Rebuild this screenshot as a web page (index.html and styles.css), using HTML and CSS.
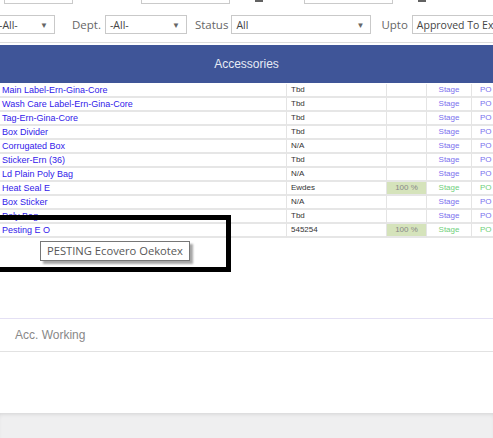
FILE: index.html
```html
<!DOCTYPE html>
<html lang="en">
<head>
    <meta charset="UTF-8">
    <meta name="viewport" content="width=device-width, initial-scale=1.0">
    <title>Accessories</title>
    <link rel="stylesheet" href="styles.css">
</head>
<body>
    <div class="page">
        <!-- fields of the row above, mostly scrolled away -->
        <div class="top-fields">
            <span class="field field-a"></span>
            <span class="field field-b"></span>
            <span class="mark"></span>
            <span class="field field-c"></span>
            <span class="mark"></span>
        </div>

        <!-- filters -->
        <div class="filters">
            <div class="select sel-first"><span>-All-</span><i>&#9660;</i></div>
            <label class="lbl lbl-dept">Dept.</label>
            <div class="select sel-dept"><span>-All-</span><i>&#9660;</i></div>
            <label class="lbl lbl-status">Status</label>
            <div class="select sel-status"><span>All</span><i>&#9660;</i></div>
            <label class="lbl lbl-upto">Upto</label>
            <div class="select sel-upto"><span>Approved To Ex</span></div>
        </div>

        <div class="panel">
            <div class="panel-title">Accessories</div>
            <table class="acc">
                <colgroup>
                    <col class="c-name">
                    <col class="c-sup">
                    <col class="c-pct">
                    <col class="c-stage">
                    <col class="c-po">
                </colgroup>
                <tr><td class="name">Main Label-Ern-Gina-Core</td><td>Tbd</td><td></td><td class="stage">Stage</td><td class="po">PO</td></tr>
                <tr><td class="name">Wash Care Label-Ern-Gina-Core</td><td>Tbd</td><td></td><td class="stage">Stage</td><td class="po">PO</td></tr>
                <tr><td class="name">Tag-Ern-Gina-Core</td><td>Tbd</td><td></td><td class="stage">Stage</td><td class="po">PO</td></tr>
                <tr><td class="name">Box Divider</td><td>Tbd</td><td></td><td class="stage">Stage</td><td class="po">PO</td></tr>
                <tr><td class="name">Corrugated Box</td><td>N/A</td><td></td><td class="stage">Stage</td><td class="po">PO</td></tr>
                <tr><td class="name">Sticker-Ern (36)</td><td>Tbd</td><td></td><td class="stage">Stage</td><td class="po">PO</td></tr>
                <tr><td class="name">Ld Plain Poly Bag</td><td>N/A</td><td></td><td class="stage">Stage</td><td class="po">PO</td></tr>
                <tr class="done"><td class="name">Heat Seal E</td><td>Ewdes</td><td class="pct">100 %</td><td class="stage">Stage</td><td class="po">PO</td></tr>
                <tr><td class="name">Box Sticker</td><td>N/A</td><td></td><td class="stage">Stage</td><td class="po">PO</td></tr>
                <tr><td class="name">Poly Bag</td><td>Tbd</td><td></td><td class="stage">Stage</td><td class="po">PO</td></tr>
                <tr class="done"><td class="name">Pesting E O</td><td>545254</td><td class="pct">100 %</td><td class="stage">Stage</td><td class="po">PO</td></tr>
            </table>
        </div>

        <div class="working">Acc. Working</div>

        <div class="footer"></div>

        <!-- highlight frame and hover tip -->
        <div class="focus-box"></div>
        <div class="tip">PESTING Ecovero Oekotex</div>
    </div>
</body>
</html>
```

FILE: styles.css
```css
html,body{
    margin: 0;
    padding: 0;
    background: #ffffff;
}
.page{
    position: relative;
    width: 493px;
    height: 438px;
    overflow: hidden;
}

/* top fields */
.top-fields{
    display: flex;
    height: 22px;
    margin-top: -18px;
}
.top-fields > span{
    flex: none;
}
.top-fields .field{
    box-sizing: border-box;
    height: 22px;
    border: 1px solid #cacaca;
}
.field-a{ width: 69px; margin-left: 4px; }
.field-b{ width: 89px; margin-left: 68px; }
.field-c{ width: 89px; margin-left: 41px; }
.top-fields .mark{
    width: 8px;
    height: 20px;
    margin-left: 25px;
    background: #626262;
}

/* filters */
.filters{
    display: flex;
    align-items: center;
    height: 19px;
    margin-top: 11px;
    font-family: "Open Sans", "Liberation Sans", sans-serif;
    font-size: 10.5px;
}
.filters > *{
    flex: none;
}
.select{
    box-sizing: border-box;
    display: flex;
    align-items: center;
    justify-content: space-between;
    height: 19px;
    padding: 0 6px 0 4px;
    border: 1px solid #c9c9c9;
    color: #444;
    white-space: nowrap;
    overflow: hidden;
}
.select i{
    font-style: normal;
    font-size: 8px;
    color: #666;
}
.sel-first{ width: 61px; margin-left: -6px; }
.sel-dept{ width: 82px; }
.sel-status{ width: 140px; }
.sel-upto{ width: 90px; }
.lbl{
    color: #666;
    font-size: 11.5px;
}
.lbl-dept{ margin: 0 4px 0 17px; }
.lbl-status{ margin: 0 3px 0 8px; }
.lbl-upto{ margin: 0 4px 0 10px; }

/* accessories panel */
.panel{
    margin-top: 8px;
    padding-top: 2px;
    border-top: 1px solid #dcdcdc;
}
.panel-title{
    height: 38px;
    line-height: 38px;
    background: #3f5598;
    color: #e6ebf5;
    text-align: center;
    font-family: "Liberation Sans", Arial, sans-serif;
    font-size: 12px;
}
.acc{
    width: 520px;
    margin-top: 1px;
    table-layout: fixed;
    border-collapse: separate;
    border-spacing: 0;
    font-family: "Liberation Sans", Arial, sans-serif;
    font-size: 8px;
    color: #333;
}
.acc .c-name{ width: 287px; }
.acc .c-sup{ width: 100px; }
.acc .c-pct{ width: 40px; }
.acc .c-stage{ width: 45px; }
.acc .c-po{ width: 48px; }
.acc td{
    height: 12px;
    line-height: 12px;
    padding: 0 0 0 4px;
    border-bottom: 2px solid #e6e6e6;
    border-right: 1px solid #e4e4e4;
    white-space: nowrap;
    overflow: hidden;
}
.acc td.name{
    padding-left: 2px;
    font-size: 9px;
    color: #3220ea;
}
.acc td.pct{
    padding: 0;
    text-align: center;
    background: #d5e3bb;
    color: #888;
}
.acc td.stage{
    padding: 0;
    text-align: center;
    color: #7a70ee;
}
.acc td.po{
    padding-left: 8px;
    color: #7a70ee;
}
.acc tr.done td.stage,
.acc tr.done td.po{
    color: #6fcf7a;
}

/* working section */
.working{
    height: 32px;
    line-height: 32px;
    margin-top: 80px;
    padding-left: 15px;
    border-top: 1px solid #e4e0f4;
    border-bottom: 1px solid #e2e2e2;
    font-family: "Liberation Sans", Arial, sans-serif;
    font-size: 12px;
    color: #888;
}
.footer{
    height: 30px;
    margin-top: 61px;
    background: #efeff0;
    box-shadow: inset 0 3px 4px -2px rgba(0,0,0,0.12);
}

/* frame drawn over the last rows */
.focus-box{
    position: absolute;
    left: -10px;
    top: 215px;
    box-sizing: border-box;
    width: 241px;
    height: 57px;
    border: 5px solid #000;
}
.tip{
    position: absolute;
    left: 40px;
    top: 241px;
    box-sizing: border-box;
    width: 150px;
    height: 20px;
    line-height: 18px;
    padding-left: 6px;
    border: 1px solid #767676;
    background: #ffffff;
    box-shadow: 3px 3px 2px rgba(0,0,0,0.35);
    font-family: "Open Sans", "Liberation Sans", sans-serif;
    font-size: 11.2px;
    color: #575757;
    white-space: nowrap;
}
```
